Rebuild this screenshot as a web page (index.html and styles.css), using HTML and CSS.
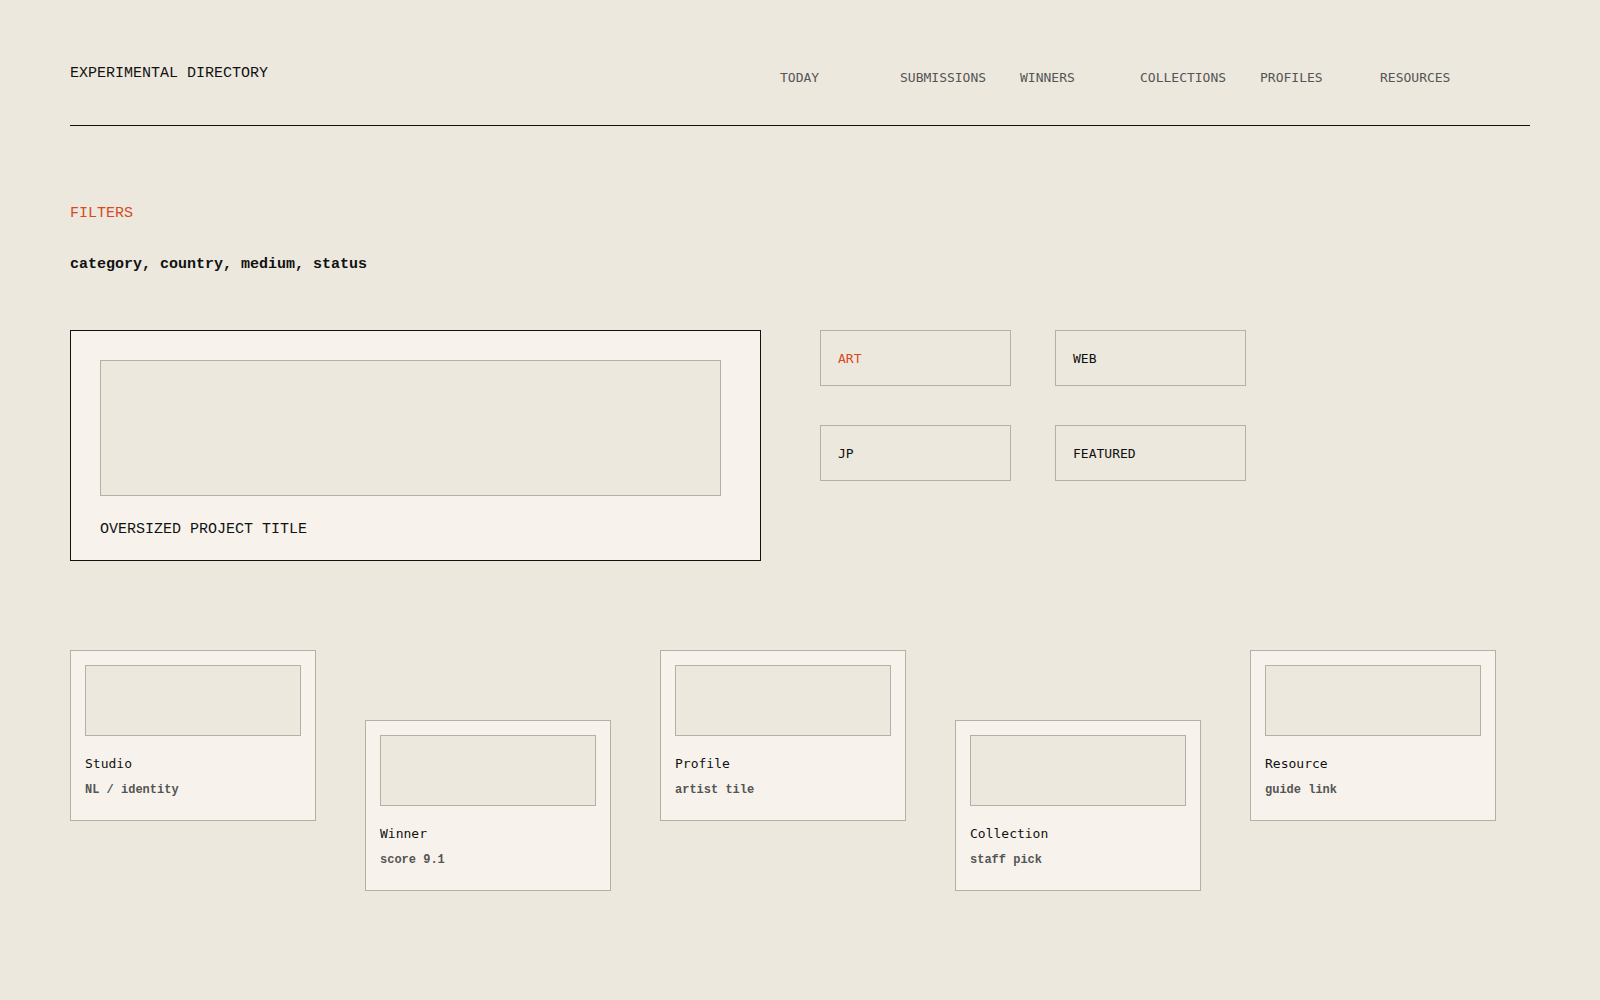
FILE: index.html
```html
<!DOCTYPE html>
<html lang="en">
<head>
    <meta charset="UTF-8">
    <meta name="viewport" content="width=device-width, initial-scale=1.0">
    <title>Experimental Directory</title>
    <link rel="stylesheet" href="styles.css">
</head>
<body>

<div class="page">
    <!-- Top bar -->
    <header class="topbar">
        <div class="brand">EXPERIMENTAL DIRECTORY</div>
        <nav class="nav">
            <a href="#">TODAY</a>
            <a href="#">SUBMISSIONS</a>
            <a href="#">WINNERS</a>
            <a href="#">COLLECTIONS</a>
            <a href="#">PROFILES</a>
            <a href="#">RESOURCES</a>
        </nav>
    </header>

    <section class="filters">
        <div class="filters-label">FILTERS</div>
        <div class="filters-list">category, country, medium, status</div>
    </section>

    <section class="feature-row">
        <div class="hero">
            <div class="hero-media"></div>
            <div class="hero-title">OVERSIZED PROJECT TITLE</div>
        </div>
        <div class="tags">
            <div class="tag tag-active">ART</div>
            <div class="tag">WEB</div>
            <div class="tag">JP</div>
            <div class="tag">FEATURED</div>
        </div>
    </section>

    <section class="cards">
        <div class="card">
            <div class="card-media"></div>
            <div class="card-title">Studio</div>
            <div class="card-meta">NL / identity</div>
        </div>
        <div class="card">
            <div class="card-media"></div>
            <div class="card-title">Winner</div>
            <div class="card-meta">score 9.1</div>
        </div>
        <div class="card">
            <div class="card-media"></div>
            <div class="card-title">Profile</div>
            <div class="card-meta">artist tile</div>
        </div>
        <div class="card">
            <div class="card-media"></div>
            <div class="card-title">Collection</div>
            <div class="card-meta">staff pick</div>
        </div>
        <div class="card">
            <div class="card-media"></div>
            <div class="card-title">Resource</div>
            <div class="card-meta">guide link</div>
        </div>
    </section>
</div>

</body>
</html>
```

FILE: styles.css
```css
body {
    margin: 0;
    padding: 0;
    background-color: #ECE8DE;
    color: #111;
    font-family: "Liberation Mono", "DejaVu Sans Mono", monospace;
    font-size: 15px;
    line-height: 20px;
}

.page {
    padding: 0 70px;
}

/* header */
.topbar {
    display: flex;
    justify-content: space-between;
    align-items: flex-start;
    padding: 64px 0 36px;
    border-bottom: 1px solid #111;
}

.brand {
    font-size: 15px;
}

.nav {
    display: grid;
    grid-template-columns: repeat(6, 120px);
    padding: 4px 0 1px;
    margin-right: 30px;
}

.nav a {
    color: #555;
    font-family: "DejaVu Sans Mono", monospace;
    font-size: 13px;
    text-decoration: none;
}

/* filters */
.filters {
    margin-top: 78px;
}

.filters-label {
    color: #D64A1F;
}

.filters-list {
    margin-top: 31px;
    font-weight: bold;
}

/* hero + tags */
.feature-row {
    display: flex;
    align-items: flex-start;
    gap: 59px;
    margin-top: 55px;
}

.hero {
    box-sizing: border-box;
    width: 691px;
    height: 231px;
    padding: 29px 0 0 29px;
    background-color: #F7F3EC;
    border: 1px solid #111;
}

.hero-media {
    box-sizing: border-box;
    width: 621px;
    height: 136px;
    background-color: #ECE8DE;
    border: 1px solid #B5B0A5;
}

.hero-title {
    margin-top: 24px;
}

.tags {
    display: grid;
    grid-template-columns: repeat(2, 191px);
    grid-auto-rows: 56px;
    column-gap: 44px;
    row-gap: 39px;
}

.tag {
    box-sizing: border-box;
    display: flex;
    align-items: center;
    padding: 2px 0 0 17px;
    border: 1px solid #B5B0A5;
    font-family: "DejaVu Sans Mono", monospace;
    font-size: 13px;
}

.tag-active {
    color: #D64A1F;
}

/* bottom cards */
.cards {
    display: flex;
    align-items: flex-start;
    gap: 49px;
    margin-top: 89px;
}

.card {
    box-sizing: border-box;
    width: 246px;
    height: 171px;
    padding: 14px;
    background-color: #F7F3EC;
    border: 1px solid #B5B0A5;
}

.card:nth-child(even) {
    margin-top: 70px;
}

.card-media {
    box-sizing: border-box;
    height: 71px;
    background-color: #ECE8DE;
    border: 1px solid #B5B0A5;
}

.card-title {
    margin-top: 19px;
    font-family: "DejaVu Sans Mono", monospace;
    font-size: 13px;
    line-height: 18px;
}

.card-meta {
    margin-top: 9px;
    color: #555;
    font-size: 12px;
    font-weight: bold;
    line-height: 16px;
}
```
